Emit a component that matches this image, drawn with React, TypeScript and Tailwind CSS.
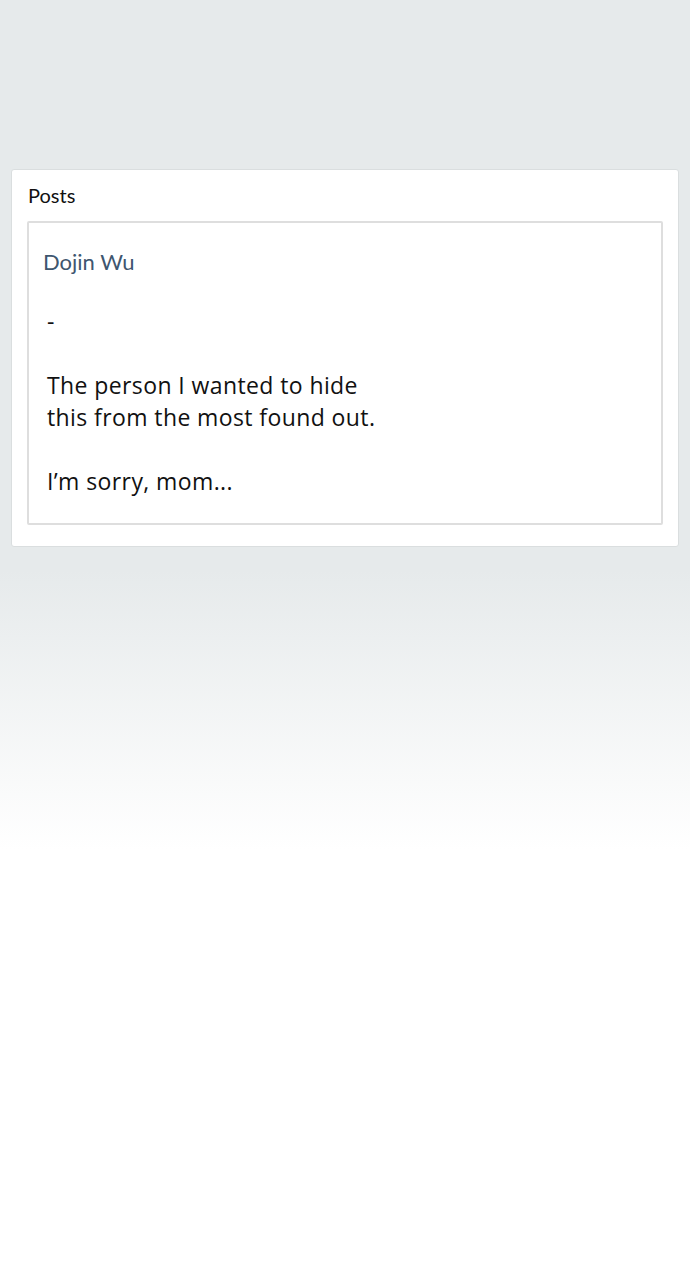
export default function App() {
  return (
    <div className="min-h-[1280px] w-full bg-[linear-gradient(to_bottom,#e6eaeb_0px,#e6eaeb_570px,#ffffff_850px)] pt-[169px] px-[11px]">
      <div className="rounded-[3px] border border-[#dadedf] bg-white px-[15px] pt-[12px] pb-[21px]">
        <h2 className="mb-[13px] pl-px font-['Lato','Open_Sans',sans-serif] text-[20px] leading-[26px] text-[#111]">
          Posts
        </h2>
        <div className="rounded-[2px] border-2 border-[#dedede] px-[14px] pt-[25px] pb-[26px]">
          <div className="font-['Lato','Open_Sans',sans-serif] text-[22px] leading-[28px] text-[#3e566f]">
            Dojin Wu
          </div>
          <div className="mt-[29px] pl-[4px] font-['Open_Sans','Noto_Sans',sans-serif] text-[23px] leading-[32px] tracking-[0.4px] text-[#111]">
            <p>-</p>
            <p>&nbsp;</p>
            <p>The person I wanted to hide</p>
            <p>this from the most found out.</p>
            <p>&nbsp;</p>
            <p>I’m sorry, mom...</p>
          </div>
        </div>
      </div>
    </div>
  )
}
